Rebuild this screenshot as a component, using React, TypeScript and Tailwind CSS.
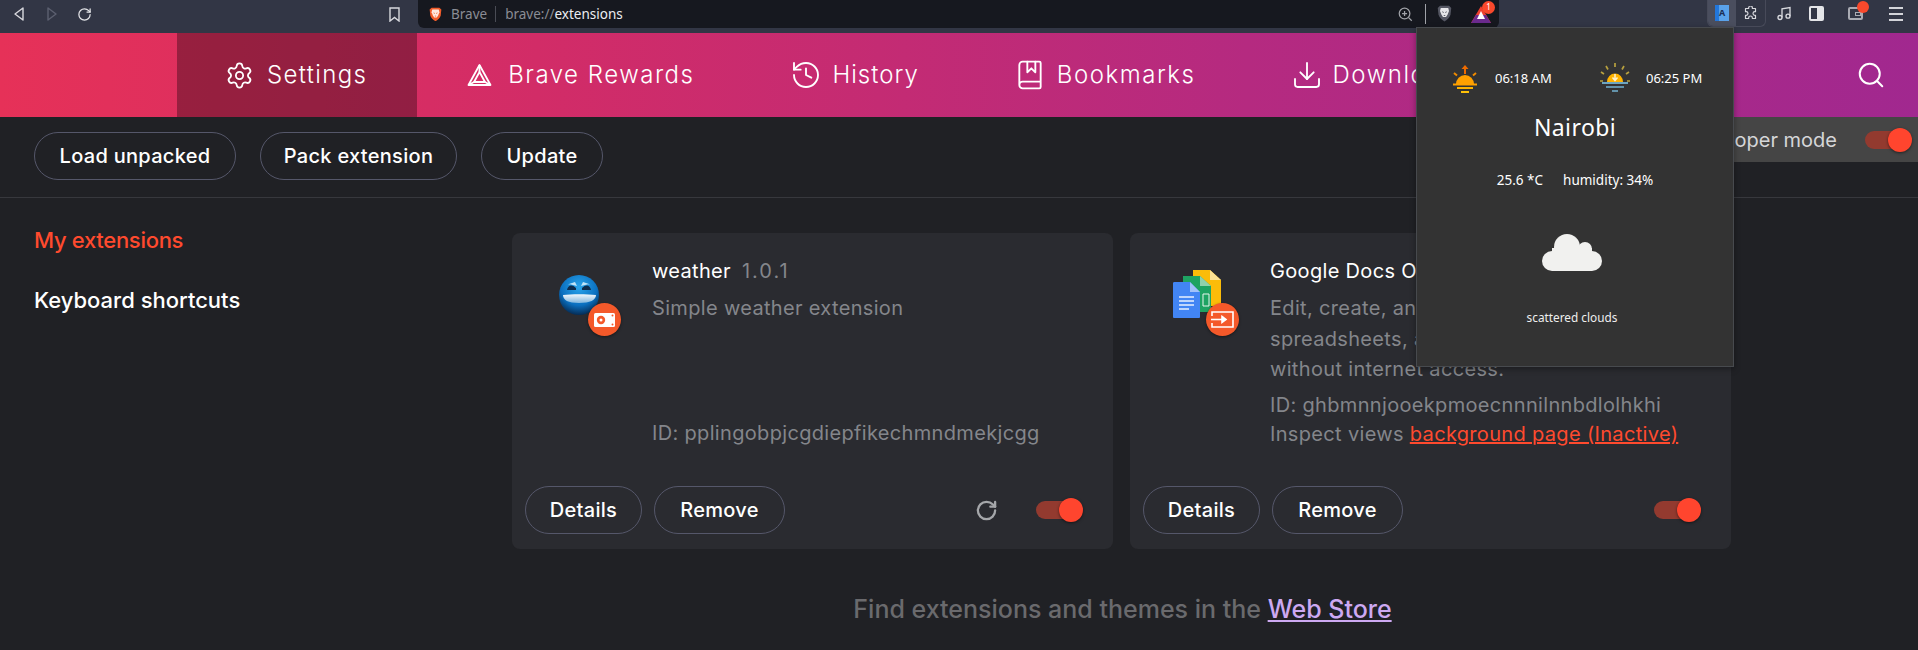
import React from "react";
import { Settings, History, BookMarked, Download, Search, RotateCw } from "lucide-react";

function Pill({ label, w }: { label: string; w: string }) {
  return (
    <button className={`${w} h-12 shrink-0 rounded-full border border-[#55576a] text-white text-[20px] tracking-[0.3px] font-medium font-['Inter',sans-serif] flex items-center justify-center`}>
      {label}
    </button>
  );
}

function Toggle() {
  return (
    <div className="relative w-[47px] h-6 shrink-0">
      <div className="absolute left-0 top-[3px] w-[36px] h-[18px] rounded-full bg-[#933a2f]" />
      <div className="absolute right-0 top-0 w-6 h-6 rounded-full bg-[#ff452e] shadow-[0_1px_3px_rgba(0,0,0,0.5)]" />
    </div>
  );
}

function NavTab({ icon, label, active, track }: { icon: React.ReactNode; label: string; active?: boolean; track: string }) {
  return (
    <div className={`h-full flex items-center gap-4 px-[50px] shrink-0 ${active ? "bg-[#000000]/32" : ""}`}>
      {icon}
      <span className={`text-[24px] font-light text-white whitespace-nowrap font-['Inter',sans-serif] ${track}`}>{label}</span>
    </div>
  );
}

function BraveTriangle() {
  return (
    <svg width="25" height="24" viewBox="0 0 25 24" fill="none" stroke="white" strokeWidth="1.8" strokeLinejoin="round">
      <path d="M12.5 2 L23.5 22 H1.5 Z" />
      <path d="M12.5 9 L18 19 H7 Z" />
      <path d="M1.5 22 L7 19 M23.5 22 L18 19 M12.5 2 V9" />
    </svg>
  );
}

function Lion({ size, fill, face }: { size: number; fill: string; face: string }) {
  return (
    <svg width={size} height={size * 1.15} viewBox="0 0 20 23">
      <path d="M4 1 H16 L19 4 L18 13 C17 17 13 20 10 22 C7 20 3 17 2 13 L1 4 Z" fill={fill} />
      <path d="M5 4 H15 L16 8 L14 13 L12 16 H8 L6 13 L4 8 Z" fill={face} />
      <path d="M7 9 L9 10 M13 9 L11 10 M9 14 H11" stroke={fill} strokeWidth="1.2" />
    </svg>
  );
}

function ToolbarIcons() {
  return (
    <div className="flex items-center">
      <div className="w-[59px] h-[27px] rounded-b-md border border-t-0 border-[#474a59] flex overflow-hidden">
        <div className="w-[28px] h-full bg-[#4a4e5e] flex items-center justify-center">
          <div className="w-[14px] h-[16px] bg-[linear-gradient(90deg,#2277dc_0%,#2277dc_30%,#5aa2ea_30%,#5aa2ea_100%)] flex items-center justify-center text-[9px] font-bold text-[#1b2f55]">A</div>
        </div>
        <div className="flex-1 flex items-center justify-center">
          <svg width="15" height="15" viewBox="0 0 24 24" fill="none" stroke="#d8d9de" strokeWidth="1.9" strokeLinejoin="round">
            <path d="M9 3a3 3 0 0 1 6 0v1h5v5h-1a3 3 0 0 0 0 6h1v5h-5v-1a3 3 0 0 0-6 0v1H4v-5h1a3 3 0 0 0 0-6H4V4h5z" />
          </svg>
        </div>
      </div>
      <div className="w-[36px] flex justify-center">
        <svg width="16" height="17" viewBox="0 0 24 24" fill="none" stroke="#d8d9de" strokeWidth="2">
          <path d="M9 18V5l12-2v13" />
          <circle cx="6" cy="18" r="3" />
          <circle cx="18" cy="16" r="3" />
        </svg>
      </div>
      <div className="w-[28px] flex justify-center">
        <div className="w-[15px] h-[15px] border-2 border-[#e4e5e8] rounded-[2px] flex justify-end"><div className="w-[5px] bg-[#e4e5e8]" /></div>
      </div>
      <div className="w-[51px] flex justify-center">
        <div className="relative w-[15px] h-[13px] border-2 border-[#a9abb3] rounded-[2px]">
          <div className="absolute left-[5px] top-[3px] w-[6px] h-[4px] border border-[#a9abb3]" />
          <div className="absolute -right-[8px] -top-[8px] w-[12px] h-[12px] rounded-full bg-[#f9492c]" />
        </div>
      </div>
      <div className="w-[30px] flex flex-col items-center gap-[4px]">
        <div className="w-[14px] h-[2px] bg-[#d3d4d9]" />
        <div className="w-[14px] h-[2px] bg-[#d3d4d9]" />
        <div className="w-[14px] h-[2px] bg-[#d3d4d9]" />
      </div>
    </div>
  );
}

function Toolbar() {
  return (
    <div className="h-[33px] bg-[#323645] flex items-start shrink-0 font-['Noto_Sans',sans-serif]">
      <div className="w-[418px] h-[28px] flex items-center shrink-0 pl-[13px]">
        <svg width="12" height="16" viewBox="0 0 12 16" fill="none" stroke="#d8d9de" strokeWidth="1.4" strokeLinejoin="round"><path d="M10 2 L2 8 L10 14 Z" /></svg>
        <svg className="ml-[21px]" width="12" height="16" viewBox="0 0 12 16" fill="none" stroke="#5c6070" strokeWidth="1.4" strokeLinejoin="round"><path d="M2 2 L10 8 L2 14 Z" /></svg>
        <RotateCw className="ml-[19px]" size={15} color="#e4e5e8" strokeWidth={2} />
        <svg className="ml-[297px]" width="11" height="15" viewBox="0 0 11 15" fill="none" stroke="#d8d9de" strokeWidth="1.4"><path d="M1 1 H10 V14 L5.5 10.5 L1 14 Z" /></svg>
      </div>
      <div className="w-[1081px] h-[28px] bg-[#16181f] rounded-b-md flex items-center pl-[11px] shrink-0">
        <Lion size={13} fill="#f25c2a" face="#ffe9df" />
        <span className="ml-[9px] text-[13.5px] text-[#8a8c94]">Brave</span>
        <div className="w-px h-4 bg-[#4a4c55] ml-[8px]" />
        <span className="ml-[9px] text-[13.5px] text-[#8a8c94]">brave://<span className="text-[#eceef2]">extensions</span></span>
        <div className="ml-auto flex items-center">
          <svg width="15" height="15" viewBox="0 0 24 24" fill="none" stroke="#a0a2a8" strokeWidth="2"><circle cx="10.5" cy="10.5" r="8.5" /><path d="M17 17 L22 22 M10.5 6.5 V14.5 M6.5 10.5 H14.5" /></svg>
          <div className="w-px h-5 bg-[#a0a2a8] ml-[12px]" />
          <div className="ml-[11px]"><Lion size={15} fill="#555763" face="#e7e7ea" /></div>
          <div className="relative ml-[19px] mr-[8px]">
            <svg width="20" height="17" viewBox="0 0 20 17"><path d="M10 0 L20 17 H0 Z" fill="#ee3f2f" /><path d="M0 17 L5 9 L15 9 L20 17 Z" fill="#6b2a8e" /><path d="M10 5 L14 13 H6 Z" fill="white" /></svg>
            <div className="absolute -right-[4px] -top-[5px] w-[13px] h-[13px] rounded-full bg-[#f9492c] text-white text-[8px] flex items-center justify-center">1</div>
          </div>
        </div>
      </div>
      <div className="flex-1 flex justify-end pr-[7px]">
        <ToolbarIcons />
      </div>
    </div>
  );
}

function NavBar() {
  return (
    <div className="h-[84px] bg-[linear-gradient(90deg,#e63158_0%,#d22c67_28%,#b52a80_65%,#a1288f_100%)] flex items-center pl-[177px] pr-[32px] shrink-0">
      <NavTab active track="tracking-[1.35px]" label="Settings" icon={<Settings className="-mx-[2.5px]" size={29} color="white" strokeWidth={1.5} />} />
      <NavTab track="tracking-[1.5px]" label="Brave Rewards" icon={<BraveTriangle />} />
      <NavTab track="tracking-[1px]" label="History" icon={<History className="-ml-[4px] -mr-[6px]" size={32} color="white" strokeWidth={1.4} />} />
      <NavTab track="tracking-[1.55px]" label="Bookmarks" icon={<BookMarked className="-mx-[5px]" size={32} color="white" strokeWidth={1.4} />} />
      <NavTab track="tracking-[1.55px]" label="Downloads" icon={<Download className="-ml-[4px] -mr-[7px]" size={32} color="white" strokeWidth={1.4} />} />
      <Search className="ml-auto" size={30} color="white" strokeWidth={1.6} />
    </div>
  );
}

function ActionBar() {
  return (
    <div className="h-[81px] border-b border-[#37383d] flex shrink-0 relative">
      <div className="flex items-start gap-6 pl-[34px] pt-[15px]">
        <Pill label="Load unpacked" w="w-[202px]" />
        <Pill label="Pack extension" w="w-[197px]" />
        <Pill label="Update" w="w-[122px]" />
      </div>
      <div className="ml-auto w-[320px] h-[45px] bg-[#454545] flex items-center justify-end pr-[6px] gap-[28px]">
        <span className="text-[20px] text-[#d5d6d8] font-['Inter',sans-serif]">Developer mode</span>
        <Toggle />
      </div>
    </div>
  );
}

function DiskBadge() {
  return (
    <div className="absolute left-[29px] top-[28px] w-[33px] h-[33px] rounded-full bg-[#f4592a] shadow-[0_1px_3px_rgba(0,0,0,0.45)] flex items-center justify-center">
      <svg width="21" height="14" viewBox="0 0 21 14"><rect width="21" height="14" rx="1.5" fill="white" /><circle cx="7" cy="7" r="4.2" fill="#f4592a" /><circle cx="7" cy="7" r="1.5" fill="white" /><circle cx="18.5" cy="2.5" r="1" fill="#f4592a" /><circle cx="18.5" cy="11.5" r="1" fill="#f4592a" /></svg>
    </div>
  );
}

function PackBadge() {
  return (
    <div className="absolute left-[33px] top-[33px] w-[33px] h-[33px] rounded-full bg-[#f4592a] shadow-[0_1px_3px_rgba(0,0,0,0.45)] flex items-center justify-center">
      <svg width="23" height="17" viewBox="0 0 23 17" fill="none" stroke="white" strokeWidth="1.6"><path d="M1 5 V1 H22 V16 H1 V12" /><path d="M0 8.5 H13" /><path d="M11 5.5 L15 8.5 L11 11.5 Z" fill="white" /></svg>
    </div>
  );
}

function BlueFace() {
  return (
    <div className="relative w-[62px] h-[61px]">
      <svg width="40" height="40" viewBox="0 0 40 40">
        <defs>
          <radialGradient id="ball" cx="50%" cy="30%" r="70%"><stop offset="0%" stopColor="#2aa5ec" /><stop offset="65%" stopColor="#0a6fbf" /><stop offset="100%" stopColor="#052c55" /></radialGradient>
          <linearGradient id="mouth" x1="0" y1="0" x2="0" y2="1"><stop offset="0%" stopColor="#f2f7fb" /><stop offset="100%" stopColor="#7fb6de" /></linearGradient>
        </defs>
        <circle cx="20" cy="20" r="20" fill="url(#ball)" />
        <path d="M4 20 C12 19 28 19 37 20 C37 25 31 28 20 28 C9 28 4 25 4 20 Z" fill="url(#mouth)" />
        <path d="M8 15 C9 10 13 9 17 13 L17 15 Z M32 15 C31 10 27 9 23 13 L23 15 Z" fill="#0d2c4d" />
        <path d="M7 10 L16 7 L18 11 L10 9 Z M33 10 L24 7 L22 11 L30 9 Z" fill="#bfe3f8" />
      </svg>
      <DiskBadge />
    </div>
  );
}

function DocsIcon() {
  return (
    <div className="relative w-[66px] h-[66px]">
      <svg width="48" height="48" viewBox="0 0 48 48">
        <path d="M20 0 H37 L48 10 V36 H20 Z" fill="#fbbc09" />
        <path d="M37 0 L48 10 H37 Z" fill="#fde293" />
        <path d="M10 6 H27 L38 16 V42 H10 Z" fill="#1ea362" />
        <path d="M27 6 L38 16 H27 Z" fill="#8fd1ab" />
        <path d="M30 24 H36 V36 H30 Z" fill="none" stroke="#e8f5ec" strokeWidth="1" />
        <path d="M0 13 C0 12 1 12 2 12 H17 L27 22 V47 C27 48 26 48 25 48 H2 C1 48 0 48 0 47 Z" fill="#4285f4" />
        <path d="M17 12 L27 22 H17 Z" fill="#a1c2fa" />
        <path d="M6 27 H21 M6 31 H21 M6 35 H21 M6 39 H16" stroke="#e8f0fe" strokeWidth="1.6" />
      </svg>
      <PackBadge />
    </div>
  );
}

function CardButtons({ right }: { right: React.ReactNode }) {
  return (
    <div className="mt-auto flex items-center pl-[13px] pb-[15px]">
      <Pill label="Details" w="w-[117px]" />
      <div className="w-[12px]" />
      <Pill label="Remove" w="w-[131px]" />
      <div className="ml-auto flex items-center pr-[30px]">{right}</div>
    </div>
  );
}

function Card({ icon, head, children, right, iconPad }: { icon: React.ReactNode; head: React.ReactNode; children: React.ReactNode; right: React.ReactNode; iconPad: string }) {
  return (
    <div className="w-[601px] h-[316px] shrink-0 rounded-lg bg-[#2a2b30] flex flex-col">
      <div className="flex flex-1 min-h-0">
        <div className={`${iconPad} shrink-0`}>{icon}</div>
        <div className="flex-1 min-w-0 pt-[24px] text-[20px] tracking-[0.33px] leading-[30.5px] text-[#84868b] font-['Inter',sans-serif]">
          {head}
          {children}
        </div>
      </div>
      <CardButtons right={right} />
    </div>
  );
}

function Content() {
  return (
    <div className="flex flex-1 min-h-0">
      <div className="w-[512px] shrink-0 pl-[34px] pt-[12px] text-[22px] leading-[60px] font-medium font-['Inter',sans-serif]">
        <div className="text-[#ff4a2e] -tracking-[0.3px]">My extensions</div>
        <div className="text-white">Keyboard shortcuts</div>
      </div>
      <div className="flex-1 min-w-0 pt-[35px]">
        <div className="flex gap-[17px]">
          <Card
            iconPad="pl-[47px] pt-[42px] w-[140px]"
            icon={<BlueFace />}
            right={
              <div className="flex items-center gap-[38px]">
                <RotateCw size={23} color="#a5a7aa" strokeWidth={2.4} />
                <Toggle />
              </div>
            }
            head={<div className="h-[30px] -mt-[1px] text-white"><span>weather</span><span className="ml-[11px] text-[#84868b] tracking-[2px]">1.0.1</span></div>}
          >
            <div className="mt-[7px]">Simple weather extension</div>
            <div className="mt-[94px]">ID: pplingobpjcgdiepfikechmndmekjcgg</div>
          </Card>
          <Card
            iconPad="pl-[43px] pt-[37px] w-[140px]"
            icon={<DocsIcon />}
            right={<Toggle />}
            head={<div className="h-[30px] -mt-[1px] text-white">Google Docs Offline</div>}
          >
            <div className="mt-[7px] whitespace-nowrap">Edit, create, and view your documents,<br />spreadsheets, and presentations — all<br />without internet access.</div>
            <div className="mt-[5px]">ID: ghbmnnjooekpmoecnnnilnnbdlolhkhi</div>
            <div className="-mt-[1px]">Inspect views <span className="text-[#ff4a2e] underline">background page (Inactive)</span></div>
          </Card>
        </div>
        <div className="mt-[42px] w-[1221px] text-center text-[25px] leading-[36px] font-medium text-[#6a6a6d] font-['Inter',sans-serif] whitespace-nowrap">
          Find extensions and themes in the <span className="text-[#cda9f2] underline">Web Store</span>
        </div>
      </div>
    </div>
  );
}

function Popup() {
  return (
    <div className="absolute left-[1416px] top-[27px] w-[318px] h-[340px] bg-[#333333] border border-[#474a4e] flex flex-col items-center text-white font-['Noto_Sans',sans-serif] shadow-[0_2px_6px_rgba(0,0,0,0.35)]">
      <div className="w-full flex items-center pt-[36px] pl-[35px]">
        <svg width="26" height="28" viewBox="0 0 26 28">
          <path d="M13 0 L16.5 4 H14 V9 H12 V4 H9.5 Z" fill="#ef6c00" />
          <path d="M2 8 L5 10.5 M24 8 L21 10.5" stroke="#ef8a00" strokeWidth="2" />
          <path d="M4 19 A9 9 0 0 1 22 19 Z" fill="#ffa000" />
          <path d="M1 19.5 H25" stroke="#ffa000" strokeWidth="2" />
          <path d="M5 23 H21" stroke="#ffb300" strokeWidth="2" />
          <path d="M9 27 H17" stroke="#ffc107" strokeWidth="2" />
        </svg>
        <span className="ml-[17px] text-[13px] w-[105px]">06:18 AM</span>
        <svg width="30" height="31" viewBox="0 0 30 31" className="-mt-[2px]">
          <path d="M15 1 V5 M6 4 L8 7.5 M24 4 L22 7.5 M1 10 L4 12 M29 10 L26 12 M0 19 H3 M27 19 H30" stroke="#b8a13f" strokeWidth="1.7" />
          <path d="M7 20 A8 8.5 0 1 1 23 20 Z" fill="#ffb300" />
          <path d="M15 12 V18 M12.5 15.5 L15 18.5 L17.5 15.5" stroke="#fff3d0" strokeWidth="1.5" fill="none" />
          <path d="M2 21 H28" stroke="#6da5c0" strokeWidth="2" />
          <path d="M6 25 H24" stroke="#6da5c0" strokeWidth="1.7" />
          <path d="M12 29 H18" stroke="#6da5c0" strokeWidth="1.7" />
        </svg>
        <span className="ml-[16px] text-[13px]">06:25 PM</span>
      </div>
      <div className="mt-[19px] text-[23px] leading-[30px] tracking-[0.4px]">Nairobi</div>
      <div className="mt-[29px] flex text-[13.5px] leading-[18px]">
        <span>25.6 *C</span>
        <span className="ml-[20px]">humidity: 34%</span>
      </div>
      <svg className="mt-[45px] -ml-[6px]" width="60" height="37" viewBox="0 0 60 37" fill="#f1f1ef">
        <circle cx="25" cy="13" r="13" />
        <circle cx="43" cy="15" r="7" />
        <circle cx="10" cy="27" r="10" />
        <circle cx="50" cy="27" r="10" />
        <rect x="10" y="14" width="40" height="23" />
      </svg>
      <div className="mt-[38px] -ml-[6px] text-[11.8px] leading-[16px] text-[#eeeeee]">scattered clouds</div>
    </div>
  );
}

export default function App() {
  return (
    <div className="relative w-[1918px] h-[650px] overflow-hidden bg-[#202125] flex flex-col">
      <Toolbar />
      <NavBar />
      <ActionBar />
      <Content />
      <Popup />
    </div>
  );
}
